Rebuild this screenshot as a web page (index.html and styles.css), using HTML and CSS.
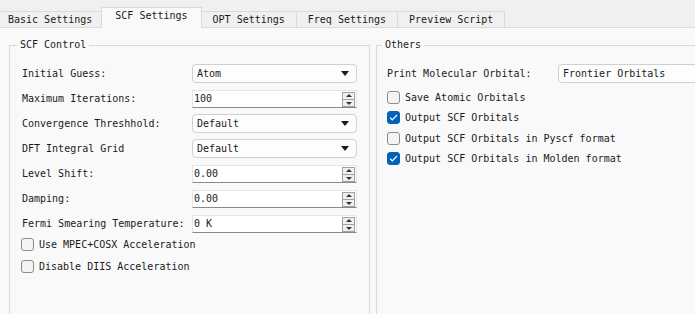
FILE: index.html
```html
<!doctype html>
<html lang="en">
<head>
  <meta charset="utf-8" />
  <title>SCF Settings</title>
  <link rel="stylesheet" href="styles.css">
</head>
<body>
  <!-- Tabs -->
  <div class="tabbar">
    <div class="tab first">Basic Settings</div>
    <div class="tab active">SCF Settings</div>
    <div class="tab">OPT Settings</div>
    <div class="tab">Freq Settings</div>
    <div class="tab last">Preview Script</div>
  </div>

  <!-- SCF page -->
  <div class="pane">
    <fieldset class="group scf">
      <legend>SCF Control</legend>
      <div class="form-row">
        <span class="label">Initial Guess:</span>
        <div class="combo">Atom<svg class="arrow" width="8" height="5" viewBox="0 0 8 5"><path d="M0 0h8L4 5z"/></svg></div>
      </div>
      <div class="form-row">
        <span class="label">Maximum Iterations:</span>
        <div class="spin"><span class="value">100</span><span class="spin-btns"><i class="up"></i><i class="down"></i></span></div>
      </div>
      <div class="form-row">
        <span class="label">Convergence Threshhold:</span>
        <div class="combo">Default<svg class="arrow" width="8" height="5" viewBox="0 0 8 5"><path d="M0 0h8L4 5z"/></svg></div>
      </div>
      <div class="form-row">
        <span class="label">DFT Integral Grid</span>
        <div class="combo">Default<svg class="arrow" width="8" height="5" viewBox="0 0 8 5"><path d="M0 0h8L4 5z"/></svg></div>
      </div>
      <div class="form-row">
        <span class="label">Level Shift:</span>
        <div class="spin"><span class="value">0.00</span><span class="spin-btns"><i class="up"></i><i class="down"></i></span></div>
      </div>
      <div class="form-row">
        <span class="label">Damping:</span>
        <div class="spin"><span class="value">0.00</span><span class="spin-btns"><i class="up"></i><i class="down"></i></span></div>
      </div>
      <div class="form-row last">
        <span class="label">Fermi Smearing Temperature:</span>
        <div class="spin"><span class="value">0 K</span><span class="spin-btns"><i class="up"></i><i class="down"></i></span></div>
      </div>
      <div class="check-row tall"><span class="box"></span>Use MPEC+COSX Acceleration</div>
      <div class="check-row tall"><span class="box"></span>Disable DIIS Acceleration</div>
    </fieldset>

    <fieldset class="group others">
      <legend>Others</legend>
      <div class="form-row">
        <span class="label">Print Molecular Orbital:</span>
        <div class="combo wide">Frontier Orbitals</div>
      </div>
      <div class="checks">
        <div class="check-row"><span class="box"></span>Save Atomic Orbitals</div>
        <div class="check-row"><span class="box checked"><svg width="9" height="7" viewBox="0 0 9 7"><path d="M1 3.6l2.3 2.2L8 1" fill="none" stroke="#fff" stroke-width="1.2"/></svg></span>Output SCF Orbitals</div>
        <div class="check-row"><span class="box"></span>Output SCF Orbitals in Pyscf format</div>
        <div class="check-row"><span class="box checked"><svg width="9" height="7" viewBox="0 0 9 7"><path d="M1 3.6l2.3 2.2L8 1" fill="none" stroke="#fff" stroke-width="1.2"/></svg></span>Output SCF Orbitals in Molden format</div>
      </div>
    </fieldset>
  </div>
</body>
</html>
```

FILE: styles.css
```css
:root {
  --line: #dadada;
  --pane: #f9f9f9;
  --text: #1a1a1a;
  --accent: #0063b8;
}
html, body { margin:0; padding:0; }
body {
  width:695px; height:314px; overflow:hidden;
  background:#f0f0f0; color:var(--text);
  font-family:"DejaVu Sans Mono", "Liberation Mono", monospace;
  font-size:10px;
}
/* Tabs */
.tabbar {
  display:flex; align-items:flex-end;
  height:27px; border-bottom:1px solid var(--line);
  box-sizing:content-box;
}
.tab {
  height:15px; line-height:15px;
  padding:0 11px;
  border:1px solid var(--line); border-bottom:none; border-right:none;
  background:#f0f0f0; white-space:nowrap;
}
.tab.first { padding:0 9px 0 8px; border-left:none; }
.tab.last { border-right:1px solid var(--line); }
.tab.active {
  height:18px; line-height:16px; padding:0 13px 2px;
  background:var(--pane); border-right:1px solid var(--line);
  margin-bottom:-1px; position:relative;
}
.tab.active + .tab { border-left:none; }
/* Page */
.pane {
  display:flex; gap:6px;
  background:var(--pane);
  padding:10px 0 0 9px;
  height:276px; overflow:hidden;
}
.group {
  margin:0; flex:none;
  border:1px solid var(--line);
  padding:12px 12px 0 12px;
  height:320px;
}
.group legend {
  line-height:14px; padding:0 3px; margin-left:-5px;
}
.scf { width:335px; }
.others { width:300px; padding-left:10px; padding-right:0; overflow:hidden; }
.form-row {
  display:grid; grid-template-columns:170px 165px;
  align-items:center; height:19px; margin-bottom:6px;
}
.form-row.last { margin-bottom:0; }
.others .form-row { grid-template-columns:171px 170px; margin-bottom:4px; }
.combo {
  position:relative; height:19px; box-sizing:border-box;
  border:1px solid #d0d0d0; border-radius:4px;
  background:#fdfdfd; line-height:17px; padding-left:4px;
}
.combo .arrow { position:absolute; right:7px; top:6px; fill:#1b1b1b; }
.spin {
  position:relative; height:18px; box-sizing:border-box;
  background:#fff; border:1px solid #e5e5e5; border-bottom-color:#8a8a8a;
  line-height:16px; padding-left:1px;
}
.spin-btns {
  position:absolute; right:1px; top:1px;
  display:flex; flex-direction:column;
}
.spin-btns i {
  position:relative; width:11px; height:6px;
  border:1px solid #9f9f9f; background:#f0f0f0;
}
.spin-btns i + i { border-top:none; }
.spin-btns i::after {
  content:""; position:absolute; left:3px; top:1px;
  border-left:3px solid transparent; border-right:3px solid transparent;
}
.spin-btns .up::after { border-bottom:3px solid #333; }
.spin-btns .down::after { border-top:3px solid #333; top:2px; }
/* Checkboxes */
.check-row {
  display:flex; align-items:center; gap:5px;
  height:20.5px; white-space:nowrap;
}
.check-row.tall { height:22px; margin-left:-1px; }
.box {
  width:13px; height:13px; box-sizing:border-box; flex:none;
  border:1px solid #8c8c8c; border-radius:3px; background:#f4f4f4;
  display:flex; align-items:center; justify-content:center;
}
.box.checked { background:var(--accent); border-color:var(--accent); }
.checks { margin-top:4px; }
```
